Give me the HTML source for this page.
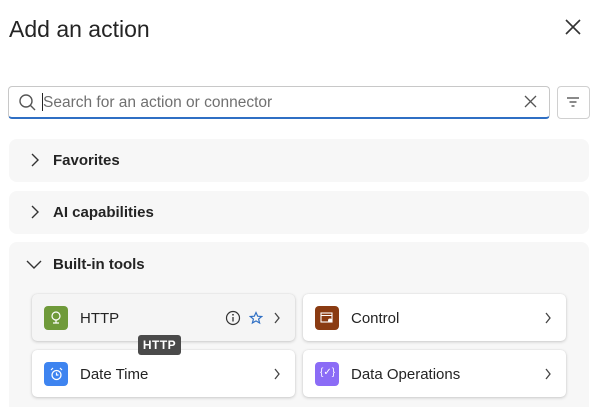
<!DOCTYPE html>
<html><head><style>
html,body{margin:0;width:602px;height:407px;overflow:hidden}
body{background:#fff;font-family:"Liberation Sans",sans-serif;color:#242424;position:relative}
.a{position:absolute}
.sec{position:absolute;left:9px;width:580px;background:#f7f7f7;border-radius:8px}
.sec .t{position:absolute;left:44px;font-size:15px;font-weight:bold;color:#242424}
.card{position:absolute;width:263px;height:47px;background:#fff;border-radius:5px;box-shadow:0 1px 3px rgba(0,0,0,.18),0 0 1px rgba(0,0,0,.12)}
.ic{position:absolute;left:12px;top:12px;width:24px;height:24px;border-radius:4px}
.lbl{position:absolute;left:48px;top:16px;font-size:15px;color:#242424}
.chev{position:absolute;right:14px;top:18px}
</style></head><body>
<div class="a" style="left:9px;top:16px;font-size:23px;color:#242424">Add an action</div>
<svg class="a" style="left:565px;top:19px" width="16" height="16"><path d="M1 1L15 15M15 1L1 15" stroke="#333" stroke-width="1.6"/></svg>
<div class="a" style="left:8px;top:86px;width:540px;height:30px;border:1px solid #c8c8c8;border-bottom:2px solid #2f6fc4;border-radius:4px"></div>
<svg class="a" style="left:18px;top:93px" width="18" height="18"><circle cx="8" cy="8" r="6" fill="none" stroke="#555" stroke-width="1.4"/><path d="M12.3 12.3L17 17" stroke="#555" stroke-width="1.4"/></svg>
<div class="a" style="left:42px;top:93px;width:1px;height:18px;background:#222"></div>
<div class="a" style="left:43px;top:94px;font-size:15.5px;color:#707070">Search for an action or connector</div>
<svg class="a" style="left:524px;top:95px" width="13" height="13"><path d="M1 1L12 12M12 1L1 12" stroke="#555" stroke-width="1.3"/></svg>
<div class="a" style="left:557px;top:86px;width:31px;height:31px;border:1px solid #d0d0d0;border-radius:4px"></div>
<svg class="a" style="left:566px;top:95px" width="14" height="14"><path d="M1 3H13M3.5 7H10.5M5.5 11H8.5" stroke="#444" stroke-width="1.3"/></svg>

<div class="sec" style="top:139px;height:43px"><svg class="a" style="left:21px;top:14px" width="10" height="14"><path d="M2 1L8 7L2 13" fill="none" stroke="#333" stroke-width="1.4"/></svg><div class="t" style="top:13px">Favorites</div></div>
<div class="sec" style="top:191px;height:43px"><svg class="a" style="left:21px;top:14px" width="10" height="14"><path d="M2 1L8 7L2 13" fill="none" stroke="#333" stroke-width="1.4"/></svg><div class="t" style="top:13px">AI capabilities</div></div>
<div class="sec" style="top:242px;height:180px"><svg class="a" style="left:17px;top:17px" width="16" height="10"><path d="M1 2L8 9L15 2" fill="none" stroke="#333" stroke-width="1.4"/></svg><div class="t" style="top:14px">Built-in tools</div></div>

<div class="card" style="left:32px;top:294px;background:#f5f5f5">
<div class="ic" style="background:#6f9a3a"></div>
<svg class="a" style="left:18px;top:17px" width="12" height="14"><circle cx="6" cy="5" r="4" fill="none" stroke="#fff" stroke-width="1.2"/><path d="M6 9V12M3 12H9" stroke="#fff" stroke-width="1.2"/></svg>
<div class="lbl">HTTP</div>
<svg class="a" style="left:193px;top:16px" width="16" height="16"><circle cx="8" cy="8" r="6.5" fill="none" stroke="#333" stroke-width="1.2"/><path d="M8 7V11.5" stroke="#333" stroke-width="1.3"/><circle cx="8" cy="4.8" r=".9" fill="#333"/></svg>
<svg class="a" style="left:217px;top:17px" width="14" height="14"><path d="M7 1.5L8.7 5.2L12.7 5.5L9.6 8.1L10.6 12L7 9.9L3.4 12L4.4 8.1L1.3 5.5L5.3 5.2Z" fill="none" stroke="#2f6fc4" stroke-width="1.2"/></svg>
<svg class="chev" width="8" height="12"><path d="M2 1L6 6L2 11" fill="none" stroke="#444" stroke-width="1.3"/></svg>
</div>
<div class="card" style="left:303px;top:294px">
<div class="ic" style="background:#8a3b12"></div>
<svg class="a" style="left:17px;top:18px" width="14" height="12"><rect x="1" y="1" width="11" height="9" fill="none" stroke="#fff" stroke-width="1.1"/><path d="M1 3.5H12" stroke="#fff"/><circle cx="10" cy="8.5" r="2" fill="#fff"/></svg>
<div class="lbl">Control</div>
<svg class="chev" width="8" height="12"><path d="M2 1L6 6L2 11" fill="none" stroke="#444" stroke-width="1.3"/></svg>
</div>
<div class="card" style="left:32px;top:350px">
<div class="ic" style="background:#3e84f0"></div>
<svg class="a" style="left:18px;top:17px" width="13" height="14"><circle cx="6.5" cy="8" r="4.5" fill="none" stroke="#fff" stroke-width="1.3"/><path d="M6.5 5.5V8H8.5M1 3L3 1M12 3L10 1" stroke="#fff" stroke-width="1.2" fill="none"/></svg>
<div class="lbl">Date Time</div>
<svg class="chev" width="8" height="12"><path d="M2 1L6 6L2 11" fill="none" stroke="#444" stroke-width="1.3"/></svg>
</div>
<div class="card" style="left:303px;top:350px">
<div class="ic" style="background:#8b6cf6"></div>
<div class="a" style="left:17px;top:17px;font-size:10px;color:#fff">{✓}</div>
<div class="lbl">Data Operations</div>
<svg class="chev" width="8" height="12"><path d="M2 1L6 6L2 11" fill="none" stroke="#444" stroke-width="1.3"/></svg>
</div>
<div class="a" style="left:138px;top:335px;width:43px;height:20px;background:#4a4a4a;border-radius:3px;color:#fff;font-size:12px;text-align:center;line-height:20px;font-weight:bold;letter-spacing:.5px">HTTP</div>
</body></html>
